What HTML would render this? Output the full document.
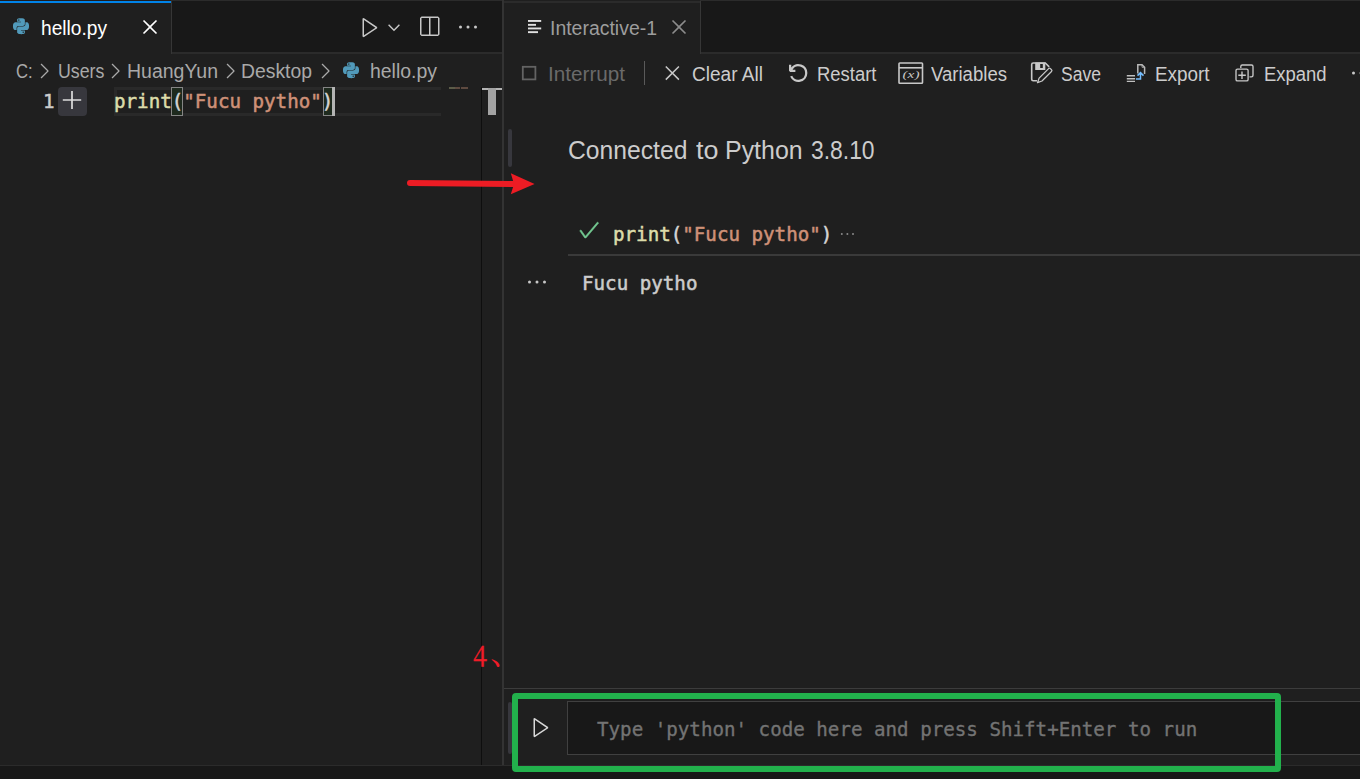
<!DOCTYPE html>
<html><head><meta charset="utf-8">
<style>
*{box-sizing:border-box;margin:0;padding:0}
html,body{width:1360px;height:779px;overflow:hidden;background:#1f1f1f;font-family:"Liberation Sans","Noto Sans CJK SC",sans-serif;color:#ccc}
.a{position:absolute}
.t{position:absolute;white-space:nowrap;line-height:1.2;transform-origin:0 0;font-family:"Liberation Sans","Noto Sans CJK SC",sans-serif}
.t.mono{font-family:"DejaVu Sans Mono","Liberation Mono",monospace;-webkit-text-stroke:0.35px currentColor}
svg{position:absolute;overflow:visible}
</style></head><body>
<!-- tab bars -->
<div class="a" style="left:0;top:0;width:1360px;height:52px;background:#181818"></div>
<div class="a" style="left:0;top:0;width:1360px;height:1px;background:#2b2b2b"></div>
<div class="a" style="left:0;top:52px;width:1360px;height:2px;background:#2b2b2b"></div>
<!-- left active tab -->
<div class="a" style="left:0;top:0;width:171px;height:54px;background:#1f1f1f"></div>
<div class="a" style="left:0;top:0;width:171px;height:1px;background:#221c19"></div>
<div class="a" style="left:0;top:1px;width:171px;height:2px;background:#0083e8"></div>
<div class="a" style="left:171px;top:1px;width:1px;height:53px;background:#363636"></div>
<!-- right tab -->
<div class="a" style="left:504px;top:0;width:196px;height:54px;background:#1f1f1f"></div>
<div class="a" style="left:504px;top:1px;width:196px;height:2px;background:#2b2b2b"></div>
<div class="a" style="left:700px;top:1px;width:1px;height:53px;background:#363636"></div>
<!-- split line -->
<div class="a" style="left:502px;top:0;width:2px;height:765px;background:#333333"></div>
<!-- overview ruler line -->
<div class="a" style="left:481px;top:87px;width:1px;height:678px;background:#0e0e0e"></div>
<!-- status bar -->
<div class="a" style="left:0;top:765px;width:1360px;height:14px;background:#181818"></div>
<div class="a" style="left:0;top:765px;width:1360px;height:1px;background:#2b2b2b"></div>

<!-- editor current line -->
<div class="a" style="left:114px;top:87px;width:327px;height:29px;border:3px solid #292929;border-right:none"></div>
<div class="a" style="left:58px;top:87px;width:29px;height:29px;background:#37373d;border-radius:4px"></div>
<svg style="left:62.300px;top:90px" width="20" height="20" viewBox="0 0 20 20"><path d="M10 0.900v18.200M0.800 10h18.400" stroke="#dcdcdc" stroke-width="1.700" fill="none"/></svg>
<!-- bracket match -->
<div class="a" style="left:171px;top:87px;width:12px;height:29px;background:#1e2a1e;border:1px solid #858585"></div>
<div class="a" style="left:323px;top:87px;width:12px;height:29px;background:#1e2a1e;border:1px solid #858585"></div>
<div class="a" style="left:332px;top:87px;width:3px;height:29px;background:#b4b4b4"></div>
<!-- minimap + overview -->
<div class="a" style="left:449px;top:87px;width:5.500px;height:2px;background:#5c5c48"></div><div class="a" style="left:455px;top:87px;width:5px;height:2px;background:#5e4a40"></div><div class="a" style="left:461px;top:87px;width:7px;height:2px;background:#5e4a40"></div>
<div class="a" style="left:482px;top:88px;width:20px;height:2px;background:#b4b4b4"></div>
<div class="a" style="left:488px;top:88px;width:8px;height:27px;background:#a3a3a3"></div>

<!-- right: cell focus bars -->
<div class="a" style="left:508px;top:129px;width:4px;height:38px;background:#37373d;border-radius:2px"></div>
<div class="a" style="left:568px;top:254px;width:792px;height:2px;background:#3a3a3a"></div>
<div class="a" style="left:504px;top:688px;width:856px;height:1px;background:#3c3c3c"></div>
<div class="a" style="left:508px;top:702px;width:4px;height:52px;background:#37373d;border-radius:2px"></div>
<!-- input box -->
<div class="a" style="left:567px;top:701px;width:800px;height:54px;background:#181818;border:1px solid #404040"></div>
<!-- toolbar separator -->
<div class="a" style="left:644px;top:61px;width:1px;height:24px;background:#5a5a5a"></div>

<!-- python icons -->
<svg style="left:13.4px;top:18.4px" width="16" height="16.3" viewBox="0 0 24 24" fill="#519aba"><path d="M14.25.18l.9.2.73.26.59.3.45.32.34.34.25.34.16.33.1.3.04.26.02.2-.01.13V8.5l-.05.63-.13.55-.21.46-.26.38-.3.31-.33.25-.35.19-.35.14-.33.1-.3.07-.26.04-.21.02H8.77l-.69.05-.59.14-.5.22-.41.27-.33.32-.27.35-.2.36-.15.37-.1.35-.07.32-.04.27-.02.21v3.06H3.17l-.21-.03-.28-.07-.32-.12-.35-.18-.36-.26-.36-.36-.35-.46-.32-.59-.28-.73-.21-.88-.14-1.05-.05-1.23.06-1.22.16-1.04.24-.87.32-.71.36-.57.4-.44.42-.33.42-.24.4-.16.36-.1.32-.05.24-.01h.16l.06.01h8.16v-.83H6.18l-.01-2.75-.02-.37.05-.34.11-.31.17-.28.25-.26.31-.23.38-.2.44-.18.51-.15.58-.12.64-.1.71-.06.77-.04.84-.02 1.27.05zm-6.3 1.98l-.23.33-.08.41.08.41.23.34.33.22.41.09.41-.09.33-.22.23-.34.08-.41-.08-.41-.23-.33-.33-.22-.41-.09-.41.09zm13.09 3.95l.28.06.32.12.35.18.36.27.36.35.35.47.32.59.28.73.21.88.14 1.04.05 1.23-.06 1.23-.16 1.04-.24.86-.32.71-.36.57-.4.45-.42.33-.42.24-.4.16-.36.09-.32.05-.24.02-.16-.01h-8.22v.82h5.84l.01 2.76.02.36-.05.34-.11.31-.17.29-.25.25-.31.24-.38.2-.44.17-.51.15-.58.13-.64.09-.71.07-.77.04-.84.01-1.27-.04-1.07-.14-.9-.2-.73-.25-.59-.3-.45-.33-.34-.34-.25-.34-.16-.33-.1-.3-.04-.25-.02-.2.01-.13v-5.34l.05-.64.13-.54.21-.46.26-.38.3-.32.33-.24.35-.2.35-.14.33-.1.3-.06.26-.04.21-.02.13-.01h5.84l.69-.05.59-.14.5-.21.41-.28.33-.32.27-.35.2-.36.15-.36.1-.35.07-.32.04-.28.02-.21V6.07h2.09l.14.01zm-6.47 14.25l-.23.33-.08.41.08.41.23.33.33.23.41.08.41-.08.33-.23.23-.33.08-.41-.08-.41-.23-.33-.33-.23-.41-.08-.41.08z"/></svg>
<svg style="left:343.3px;top:62.4px" width="16" height="16.3" viewBox="0 0 24 24" fill="#519aba"><path d="M14.25.18l.9.2.73.26.59.3.45.32.34.34.25.34.16.33.1.3.04.26.02.2-.01.13V8.5l-.05.63-.13.55-.21.46-.26.38-.3.31-.33.25-.35.19-.35.14-.33.1-.3.07-.26.04-.21.02H8.77l-.69.05-.59.14-.5.22-.41.27-.33.32-.27.35-.2.36-.15.37-.1.35-.07.32-.04.27-.02.21v3.06H3.17l-.21-.03-.28-.07-.32-.12-.35-.18-.36-.26-.36-.36-.35-.46-.32-.59-.28-.73-.21-.88-.14-1.05-.05-1.23.06-1.22.16-1.04.24-.87.32-.71.36-.57.4-.44.42-.33.42-.24.4-.16.36-.1.32-.05.24-.01h.16l.06.01h8.16v-.83H6.18l-.01-2.75-.02-.37.05-.34.11-.31.17-.28.25-.26.31-.23.38-.2.44-.18.51-.15.58-.12.64-.1.71-.06.77-.04.84-.02 1.27.05zm-6.3 1.98l-.23.33-.08.41.08.41.23.34.33.22.41.09.41-.09.33-.22.23-.34.08-.41-.08-.41-.23-.33-.33-.22-.41-.09-.41.09zm13.09 3.95l.28.06.32.12.35.18.36.27.36.35.35.47.32.59.28.73.21.88.14 1.04.05 1.23-.06 1.23-.16 1.04-.24.86-.32.71-.36.57-.4.45-.42.33-.42.24-.4.16-.36.09-.32.05-.24.02-.16-.01h-8.22v.82h5.84l.01 2.76.02.36-.05.34-.11.31-.17.29-.25.25-.31.24-.38.2-.44.17-.51.15-.58.13-.64.09-.71.07-.77.04-.84.01-1.27-.04-1.07-.14-.9-.2-.73-.25-.59-.3-.45-.33-.34-.34-.25-.34-.16-.33-.1-.3-.04-.25-.02-.2.01-.13v-5.34l.05-.64.13-.54.21-.46.26-.38.3-.32.33-.24.35-.2.35-.14.33-.1.3-.06.26-.04.21-.02.13-.01h5.84l.69-.05.59-.14.5-.21.41-.28.33-.32.27-.35.2-.36.15-.36.1-.35.07-.32.04-.28.02-.21V6.07h2.09l.14.01zm-6.47 14.25l-.23.33-.08.41.08.41.23.33.33.23.41.08.41-.08.33-.23.23-.33.08-.41-.08-.41-.23-.33-.33-.23-.41-.08-.41.08z"/></svg>
<!-- left tab close -->
<svg style="left:136.700px;top:13.900px" width="26" height="26" viewBox="0 0 16 16" fill="#ffffff"><path d="M8 8.707l3.646 3.647.708-.707L8.707 8l3.647-3.646-.707-.708L8 7.293 4.354 3.646l-.707.708L7.293 8l-3.646 3.646.707.708L8 8.707z"/></svg>
<!-- editor actions -->
<svg style="left:358.300px;top:14.700px" width="24" height="24" viewBox="0 0 16 16" fill="#c8c8c8"><path d="M3.78 2L3 2.41v12l.78.42 9-6V8l-9-6zM4 13.48V3.35l7.6 5.07L4 13.48z"/></svg>
<svg style="left:384px;top:17px" width="20" height="20" viewBox="0 0 20 20"><path d="M4.6 7.8L10 13.2L15.4 7.8" stroke="#c8c8c8" stroke-width="1.4" fill="none"/></svg>
<svg style="left:416.500px;top:14.500px" width="24" height="24" viewBox="0 0 16 16" fill="#c8c8c8"><path d="M14 1H3L2 2v11l1 1h11l1-1V2l-1-1zM8 13H3V2h5v11zm6 0H9V2h5v11z"/></svg>
<svg style="left:455.600px;top:15px" width="24" height="24" viewBox="0 0 16 16" fill="#c8c8c8"><path d="M4 8a1 1 0 1 1-2 0 1 1 0 0 1 2 0zm5 0a1 1 0 1 1-2 0 1 1 0 0 1 2 0zm5 0a1 1 0 1 1-2 0 1 1 0 0 1 2 0z"/></svg>
<!-- breadcrumb chevrons -->
<svg style="left:31.5px;top:58.5px" width="24" height="24" viewBox="0 0 16 16" fill="#a9a9a9"><path d="M10.072 8.024L5.715 3.667l.618-.62L11 7.716v.618L6.333 13l-.618-.619 4.357-4.357z"/></svg>
<svg style="left:102.6px;top:58.5px" width="24" height="24" viewBox="0 0 16 16" fill="#a9a9a9"><path d="M10.072 8.024L5.715 3.667l.618-.62L11 7.716v.618L6.333 13l-.618-.619 4.357-4.357z"/></svg>
<svg style="left:218.300px;top:58.500px" width="24" height="24" viewBox="0 0 16 16" fill="#a9a9a9"><path d="M10.072 8.024L5.715 3.667l.618-.62L11 7.716v.618L6.333 13l-.618-.619 4.357-4.357z"/></svg>
<svg style="left:313.2px;top:58.5px" width="24" height="24" viewBox="0 0 16 16" fill="#a9a9a9"><path d="M10.072 8.024L5.715 3.667l.618-.62L11 7.716v.618L6.333 13l-.618-.619 4.357-4.357z"/></svg>
<!-- interactive tab icon -->
<svg style="left:0;top:0" width="1360" height="60" viewBox="0 0 1360 60" fill="#e0e0e0">
<rect x="528" y="20" width="13.2" height="1.9"/><rect x="528" y="23.9" width="8" height="1.9"/><rect x="528" y="27.5" width="13.2" height="1.9"/><rect x="528" y="31.2" width="10" height="1.9"/>
</svg>
<svg style="left:666px;top:14px" width="26" height="26" viewBox="0 0 16 16" fill="#8c8c8c"><path d="M8 8.707l3.646 3.647.708-.707L8.707 8l3.647-3.646-.707-.708L8 7.293 4.354 3.646l-.707.708L7.293 8l-3.646 3.646.707.708L8 8.707z"/></svg>
<!-- toolbar icons -->
<svg style="left:0;top:54px" width="1360" height="40" viewBox="0 54 1360 40" fill="none">
<rect x="522.8" y="66.8" width="12.6" height="12.6" stroke="#636363" stroke-width="1.800"/>
<path d="M665.8 66.5L678.9 79.6M678.9 66.5L665.8 79.6" stroke="#c8c8c8" stroke-width="1.5"/>
<!-- variables -->
<rect x="899" y="63" width="23.5" height="20.2" rx="0.8" stroke="#c8c8c8" stroke-width="1.6"/>
<path d="M899 67.8H922.5" stroke="#c8c8c8" stroke-width="1.6"/>
<text x="911" y="77.900" text-anchor="middle" font-family="Liberation Serif, serif" font-style="italic" font-size="10.600" fill="#c8c8c8" textLength="17" lengthAdjust="spacingAndGlyphs">(x)</text>
<!-- save -->
<path d="M1037 80.8H1033.2Q1031.7 80.8 1031.700 79.3V64.500Q1031.700 63 1033.200 63H1045.300L1049.200 66.900" stroke="#c8c8c8" stroke-width="1.6"/>
<path d="M1035.2 62.500H1045.300V70H1035.200Z" fill="#c8c8c8"/>
<rect x="1040.200" y="64" width="2.600" height="4" fill="#1f1f1f"/>
<path d="M1037.500 82.700L1039.100 78.100L1048.600 68.600Q1049.500 67.700 1050.400 68.600L1051.500 69.700Q1052.400 70.600 1051.500 71.500L1042 81Z" stroke="#c8c8c8" stroke-width="1.3" fill="#1f1f1f" stroke-linejoin="round"/>
<!-- export -->
<path d="M1126.800 75.800H1135M1126.800 78.700H1135M1126.800 81.400H1135" stroke="#c0c0c0" stroke-width="1.4"/>
<path d="M1137.800 73.500V64.700H1142L1144.600 67.300V74" stroke="#b8b8b8" stroke-width="1.5"/>
<path d="M1142 64.700V67.300H1144.600" stroke="#b8b8b8" stroke-width="0.8"/>
<path d="M1135.900 79H1140.500V72.800M1137.500 75.600L1140.500 72.600L1143.500 75.600" stroke="#75beff" stroke-width="1.5"/>
<!-- expand -->
<path d="M1240.800 68V66.500Q1240.800 65 1242.300 65H1251.500Q1253 65 1253 66.500V75.300Q1253 76.800 1251.500 76.800H1249.500" stroke="#c8c8c8" stroke-width="1.350"/>
<rect x="1236" y="69.100" width="12.100" height="11.800" rx="1.500" stroke="#c8c8c8" stroke-width="1.350"/>
<path d="M1238.300 75.200H1245.800M1242 71.500V79" stroke="#c8c8c8" stroke-width="1.4"/>
</svg>
<svg style="left:786px;top:60.700px" width="24" height="24" viewBox="0 0 16 16" fill="#c8c8c8"><path d="M12.75 8a4.500 4.500 0 0 1-8.610 1.834l-1.391.565A6.001 6.001 0 0 0 14.250 8 6 6 0 0 0 3.500 4.334V2.500H2v4l.750.750h3.500v-1.500H4.352A4.500 4.500 0 0 1 12.750 8z"/></svg>
<svg style="left:1349.100px;top:61px" width="24" height="24" viewBox="0 0 16 16" fill="#c8c8c8"><path d="M4 8a1 1 0 1 1-2 0 1 1 0 0 1 2 0zm5 0a1 1 0 1 1-2 0 1 1 0 0 1 2 0zm5 0a1 1 0 1 1-2 0 1 1 0 0 1 2 0z"/></svg>
<!-- cell icons -->
<svg style="left:577px;top:218.300px" width="24" height="24" viewBox="0 0 16 16" fill="#73c991" stroke="#73c991" stroke-width="0.35"><path d="M14.431 3.323l-8.47 10-.79-.036-3.35-4.77.818-.574 2.978 4.24 8.051-9.506.764.646z"/></svg>
<svg style="left:838px;top:226px" width="20" height="16" viewBox="0 0 20 16" fill="#8a8a8a"><circle cx="3.800" cy="8" r="1"/><circle cx="9.400" cy="8" r="1"/><circle cx="15" cy="8" r="1"/></svg>
<svg style="left:524.500px;top:270px" width="24" height="24" viewBox="0 0 16 16" fill="#c8c8c8"><path d="M4 8a1 1 0 1 1-2 0 1 1 0 0 1 2 0zm5 0a1 1 0 1 1-2 0 1 1 0 0 1 2 0zm5 0a1 1 0 1 1-2 0 1 1 0 0 1 2 0z"/></svg>
<svg style="left:528.500px;top:715px" width="24" height="24" viewBox="0 0 16 16" fill="#d8d8d8"><path d="M3.78 2L3 2.41v12l.78.42 9-6V8l-9-6zM4 13.48V3.35l7.6 5.07L4 13.48z"/></svg>

<div id="t1" class="t" style="left:41.40px;top:16.70px;font-size:19.5px;color:#ffffff;transform:scaleX(0.9821)">hello.py</div>
<div id="t2" class="t" style="left:16.41px;top:59.50px;font-size:19.5px;color:#a9a9a9;transform:scaleX(0.8535)">C:</div>
<div id="t3" class="t" style="left:57.59px;top:59.50px;font-size:19.5px;color:#a9a9a9;transform:scaleX(0.9114)">Users</div>
<div id="t4" class="t" style="left:126.98px;top:59.50px;font-size:19.5px;color:#a9a9a9;transform:scaleX(0.9993)">HuangYun</div>
<div id="t5" class="t" style="left:240.99px;top:59.50px;font-size:19.5px;color:#a9a9a9;transform:scaleX(0.9926)">Desktop</div>
<div id="t6" class="t" style="left:370.00px;top:59.50px;font-size:19.5px;color:#a9a9a9;transform:scaleX(0.9967)">hello.py</div>
<div id="t7" class="t" style="left:549.98px;top:16.50px;font-size:19.5px;color:#9d9d9d;transform:scaleX(0.9973)">Interactive-1</div>
<div id="t8" class="t" style="left:547.98px;top:63.00px;font-size:19.5px;color:#6a6a6a;transform:scaleX(1.0604)">Interrupt</div>
<div id="t9" class="t" style="left:692.00px;top:63.00px;font-size:19.5px;color:#cccccc;transform:scaleX(0.9777)">Clear All</div>
<div id="t10" class="t" style="left:816.99px;top:63.00px;font-size:19.5px;color:#cccccc;transform:scaleX(0.9450)">Restart</div>
<div id="t11" class="t" style="left:931.00px;top:63.00px;font-size:19.5px;color:#cccccc;transform:scaleX(0.9517)">Variables</div>
<div id="t12" class="t" style="left:1061.00px;top:63.00px;font-size:19.5px;color:#cccccc;transform:scaleX(0.9000)">Save</div>
<div id="t13" class="t" style="left:1155.39px;top:63.00px;font-size:19.5px;color:#cccccc;transform:scaleX(0.9688)">Export</div>
<div id="t14" class="t" style="left:1264.37px;top:63.00px;font-size:19.5px;color:#cccccc;transform:scaleX(0.9469)">Expand</div>
<div id="t15" class="t" style="left:568.20px;top:135.20px;font-size:26px;color:#cccccc;transform:scaleX(0.9495)">Connected</div>
<div id="t16" class="t" style="left:695.59px;top:135.20px;font-size:26px;color:#cccccc;transform:scaleX(1.0339)">to</div>
<div id="t17" class="t" style="left:725.38px;top:135.20px;font-size:26px;color:#cccccc;transform:scaleX(0.9589)">Python</div>
<div id="t18" class="t" style="left:811.40px;top:135.20px;font-size:26px;color:#cccccc;transform:scaleX(0.8797)">3.8.10</div>
<div id="m1" class="t mono" style="-webkit-text-stroke:0.5px currentColor;left:43.30px;top:91.10px;font-size:19.1px;color:#cccccc;transform:scaleX(1.0041)">1</div>
<div id="m2" class="t mono" style="-webkit-text-stroke:0.5px currentColor;left:113.90px;top:91.10px;font-size:19.1px;color:#d4d4d4;transform:scaleX(1.0041)"><span style="color:#dcdcaa">print</span><span style="color:#d4d4d4">(</span><span style="color:#ce9178">"Fucu pytho"</span><span style="color:#d4d4d4">)</span></div>
<div id="m3" class="t mono" style="-webkit-text-stroke:0.5px currentColor;left:612.90px;top:223.90px;font-size:19.1px;color:#d4d4d4;transform:scaleX(1.0041)"><span style="color:#dcdcaa">print</span><span style="color:#d4d4d4">(</span><span style="color:#ce9178">"Fucu pytho"</span><span style="color:#d4d4d4">)</span></div>
<div id="m4" class="t mono" style="-webkit-text-stroke:0.5px currentColor;left:582.30px;top:273.00px;font-size:19.1px;color:#cccccc;transform:scaleX(1.0041)">Fucu pytho</div>
<div id="m5" class="t mono" style="left:597.30px;top:718.70px;font-size:19.1px;color:#737373;transform:scaleX(1.0041)">Type 'python' code here and press Shift+Enter to run</div>
<div class="t" style="left:473.3px;top:640.1px;font-size:28.1px;line-height:1;color:#f01c28;font-family:'Noto Serif CJK SC','Liberation Serif',serif;-webkit-text-stroke:0.5px #f01c28;transform:scaleX(0.9)">4</div>
<div class="t" style="left:490.2px;top:635.7px;font-size:30.8px;line-height:1;color:#f01c28;font-family:'Noto Serif CJK SC',serif">、</div>
<!-- annotations -->
<svg style="left:0;top:0" width="1360" height="779" viewBox="0 0 1360 779">
<path d="M410 183 L515 184" stroke="#ed1c24" stroke-width="6" stroke-linecap="round" fill="none"/>
<path d="M510.800 173.300 L534.600 183.900 L510.800 194.300 L514 184 Z" fill="#ed1c24"/>
<rect x="515" y="696" width="763" height="73" rx="1" fill="none" stroke="#22b14c" stroke-width="6"/>
</svg>
</body></html>
